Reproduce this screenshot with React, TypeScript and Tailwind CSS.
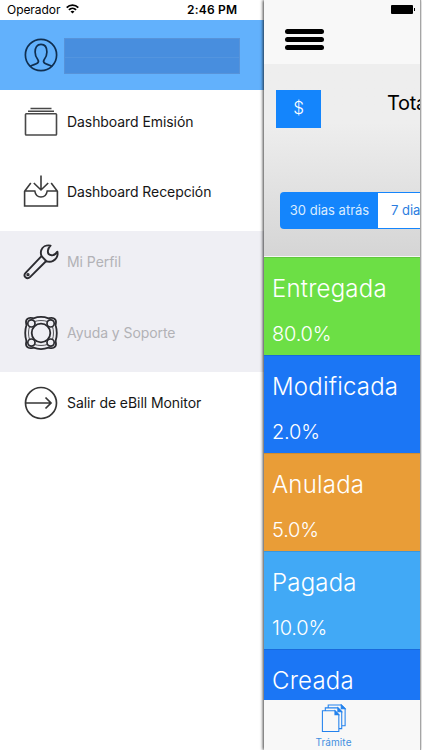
import React from "react";

function UserIcon() {
  return (
    <svg className="h-[34px] w-[34px]" viewBox="0 0 34 34" fill="none" stroke="#102f50" strokeWidth="1.7" strokeLinejoin="round">
      <circle cx="17" cy="17" r="15.6" />
      <path d="M6.300 28.300c2.200-1.600 5.500-1.800 7.300-3.300 1.100-.9.900-2.500 0-3.700-1.500-2-2.500-4.300-2.500-7.300 0-4.700 1.900-7.600 5.900-7.600s5.900 2.900 5.900 7.600c0 3-1 5.300-2.500 7.300-.9 1.200-1.100 2.800 0 3.700 1.800 1.500 5.100 1.700 7.300 3.300" />
    </svg>
  );
}

function StackIcon() {
  return (
    <svg className="h-[34px] w-[34px]" viewBox="0 0 34 34" fill="none" stroke="#484848" strokeWidth="1.600">
      <path d="M6.500 3.500h21M4 6.300h26" strokeWidth="1.400" />
      <rect x="1.500" y="8.700" width="31" height="21.300" rx=".8" />
    </svg>
  );
}

function InboxIcon() {
  return (
    <svg className="h-[34px] w-[36px]" viewBox="0 0 36 34" fill="none" stroke="#3a3a3a" strokeWidth="1.600">
      <path d="M18 .5v14.500M10.800 8l7.200 7 7.200-7M7.800 8 1.600 16.300v14.700h32.800V16.300L28.200 8M1.600 16h10.200c.6 3.900 2.900 6 6.200 6s5.600-2.100 6.200-6h10.200" />
    </svg>
  );
}

function WrenchIcon() {
  return (
    <svg className="h-[36px] w-[36px]" viewBox="0 0 36 36" fill="none" stroke="#2b2b30" strokeWidth="1.900" strokeLinejoin="round">
      <path d="M27.600 1.600c-4.600-.8-8.300 1.300-9.400 4.800-.6 2-.4 3.900.3 5.700L2.600 28.800c-1.300 1.400-1.300 3.300-.1 4.500 1.300 1.200 3.200 1.200 4.500-.1L23.200 17c2 .9 4.700 1 6.900-.2 3.700-2 5.100-5.100 4.300-9.200-1.500 2.400-3.500 4-5.800 3.700-2.500-.3-3.900-2.200-3.700-4.600.2-2.100 1.100-3.600 2.700-5.100z" />
      <path d="m18.500 12.100 4.700 4.900" />
      <circle cx="5" cy="30.700" r=".7" />
    </svg>
  );
}

function SupportIcon() {
  return (
    <svg className="h-[34px] w-[34px]" viewBox="0 0 34 34" fill="none" stroke="#2b2b30" strokeWidth="1.800" strokeLinejoin="round">
      <path d="M4.500 2.200C6 1.500 7.500 1.900 9.500 2.300 14 .7 20 .7 24.500 2.300c2-.4 3.500-.8 5-.1 1.500.7 2.600 2 2.500 4-.1 1.300-.5 2.300-.3 3.300 1.300 4.500 1.300 10.500 0 15-.2 1 .2 2 .3 3.300.1 2-1 3.300-2.500 4-1.500.7-3 .3-5-.1-4.500 1.600-10.500 1.600-15 0-2 .4-3.500.8-5 .1-1.500-.7-2.600-2-2.500-4 .1-1.300.5-2.300.3-3.300-1.300-4.500-1.300-10.500 0-15 .2-1-.2-2-.3-3.300-.1-2 1-3.300 2.500-4z" />
      <circle cx="17" cy="17" r="9.300" />
      <g strokeWidth="1.700">
        <circle cx="7.400" cy="7.400" r="3.600" />
        <circle cx="26.600" cy="7.400" r="3.600" />
        <circle cx="7.400" cy="26.600" r="3.600" />
        <circle cx="26.600" cy="26.600" r="3.600" />
        <path d="M10.500 5.500c4-1.300 9-1.300 13 0M10.500 28.500c4 1.300 9 1.300 13 0M5.500 10.500c-1.300 4-1.300 9 0 13M28.500 10.500c1.300 4 1.300 9 0 13" strokeWidth=".8" />
      </g>
    </svg>
  );
}

function ExitIcon() {
  return (
    <svg className="h-[34px] w-[34px]" viewBox="0 0 34 34" fill="none" stroke="#363636" strokeWidth="1.700">
      <circle cx="17" cy="17" r="15.500" />
      <path d="M1.500 17H27M21.500 11.500 27 17l-5.500 5.500" />
    </svg>
  );
}

function MenuRow({ icon, label, muted = false, tracking }: { icon: React.ReactNode; label: string; muted?: boolean; tracking: string }) {
  return (
    <div className={`flex h-[70.4px] items-center pb-[7px] ${muted ? "bg-[#efeff4] text-[#b2b2b6]" : "bg-white text-[#161616]"}`}>
      <span className="ml-[23px] flex w-9 shrink-0 justify-center">{icon}</span>
      <span className={`ml-2 whitespace-nowrap text-[14px] leading-5 ${tracking}`}>{label}</span>
    </div>
  );
}

function StatusCard({ title, value, color }: { title: string; value?: string; color: string }) {
  return (
    <div className={`h-[98px] shrink-0 border-t border-black/10 pl-[8px] pt-[15px] text-white ${color}`}>
      <div className="text-[24px] font-light leading-8 tracking-[0.2px]">{title}</div>
      {value && <div className="mt-[17px] text-[20px] font-light leading-6 tracking-[-0.2px]">{value}</div>}
    </div>
  );
}

function DocumentsIcon() {
  return (
    <svg className="h-[30px] w-[26px]" viewBox="0 0 26 30" fill="none" stroke="#2382ed" strokeWidth="1.100">
      <path d="M1 7h13l4 4v17.500H1zM4 7V4h13l4 4v17.500h-3M7 4V1h13.500L24.500 5v17.500H21" />
      <path d="M14 7v4h4zM17 4v4h4zM20.500 1v4h4z" fill="#2382ed" />
    </svg>
  );
}

export default function App() {
  return (
    <div className="flex h-[750px] w-[422px] overflow-hidden bg-white font-['Inter',sans-serif] text-black">
      <aside className="w-[264px] shrink-0">
        <div className="flex h-5 items-center">
          <span className="ml-[7px] w-[54px] whitespace-nowrap text-[12px] tracking-[-0.05px]">Operador</span>
          <svg className="mb-[2px] ml-[5px] h-[10px] w-[13px]" viewBox="0 0 13 10" fill="none" stroke="#000" strokeWidth="1.700">
            <path d="M.7 3.700c3.200-3.400 8.400-3.400 11.600 0M2.900 5.900c2-2 5.200-2 7.200 0" />
            <path d="m6.500 9.500-2-2c1.100-1 2.900-1 4 0z" fill="#000" stroke="none" />
          </svg>
          <span className="ml-[108px] whitespace-nowrap text-[12px] font-semibold tracking-[0.2px]">2:46 PM</span>
        </div>
        <div className="flex h-[70px] items-center bg-[#62b1fc]">
          <span className="ml-[24px]"><UserIcon /></span>
          <div className="ml-[6px] mt-[2px] flex h-9 w-[176px] flex-col border border-[#5793d9] bg-[#488ede]">
            <div className="h-[19px] border-b border-[#5395df]" />
          </div>
        </div>
        <MenuRow icon={<StackIcon />} label="Dashboard Emisión" tracking="tracking-[-0.07px]" />
        <MenuRow icon={<InboxIcon />} label="Dashboard Recepción" tracking="tracking-[-0.08px]" />
        <MenuRow icon={<WrenchIcon />} label="Mi Perfil" muted tracking="tracking-[-0.05px]" />
        <MenuRow icon={<SupportIcon />} label="Ayuda y Soporte" muted tracking="tracking-[-0.07px]" />
        <MenuRow icon={<ExitIcon />} label="Salir de eBill Monitor" tracking="tracking-[-0.07px]" />
      </aside>

      <main className="z-10 flex w-[157px] shrink-0 flex-col border-r border-[#a5a5a5] bg-[#f8f8f8] shadow-[-1px_0_3px_rgba(0,0,0,0.75)]">
        <header className="flex h-[65px] shrink-0 flex-col border-b border-[#eeeeee]">
          <div className="flex h-5 items-center justify-end pr-[5px]">
            <span className="mb-[2px] h-[9px] w-[22px] rounded-[1px] bg-black" />
            <span className="mb-[2px] ml-px h-[3px] w-px bg-black" />
          </div>
          <div className="ml-[21px] mt-[9px] flex w-[39px] flex-col gap-[3px]">
            <span className="h-[5px] rounded-full bg-black" />
            <span className="h-[5px] rounded-full bg-black" />
            <span className="h-[5px] rounded-full bg-black" />
          </div>
        </header>
        <section className="h-[192px] shrink-0 overflow-hidden border-b border-[#f5f5f5] bg-linear-to-b from-[#eeeeee] from-30% to-[#d5d5d5]">
          <div className="flex pt-[25px]">
            <div className="ml-[12px] flex h-[38px] w-[45px] shrink-0 items-center justify-center bg-[#1485fc] text-[17px] font-light text-white">$</div>
            <span className="ml-[66px] whitespace-nowrap text-[20px] leading-[26px] tracking-[-0.3px]">Tota</span>
          </div>
          <div className="mt-[64px] flex h-[37px] pl-[16px]">
            <div className="flex flex-1 rounded-l-[4px] border border-r-0 border-[#1485fc] bg-white text-[13px]">
              <span className="flex w-[97px] shrink-0 items-center justify-center whitespace-nowrap bg-[#1485fc] text-[#d9ecff]">30 dias atrás</span>
              <span className="flex items-center whitespace-nowrap pl-[13px] text-[#2b7de0]">7 dia</span>
            </div>
          </div>
        </section>
        <section className="flex h-[443px] shrink-0 flex-col overflow-hidden">
          <StatusCard title="Entregada" value="80.0%" color="bg-[#6cdf45]" />
          <StatusCard title="Modificada" value="2.0%" color="bg-[#1b76f5]" />
          <StatusCard title="Anulada" value="5.0%" color="bg-[#e99d37]" />
          <StatusCard title="Pagada" value="10.0%" color="bg-[#41a9f6]" />
          <StatusCard title="Creada" color="bg-[#1b76f5]" />
        </section>
        <footer className="flex h-[50px] shrink-0 flex-col items-center pr-[17px] pt-[4px]">
          <DocumentsIcon />
          <span className="mt-px text-[10px] leading-[16px] tracking-[0.1px] text-[#438fe0]">Trámite</span>
        </footer>
      </main>
    </div>
  );
}
